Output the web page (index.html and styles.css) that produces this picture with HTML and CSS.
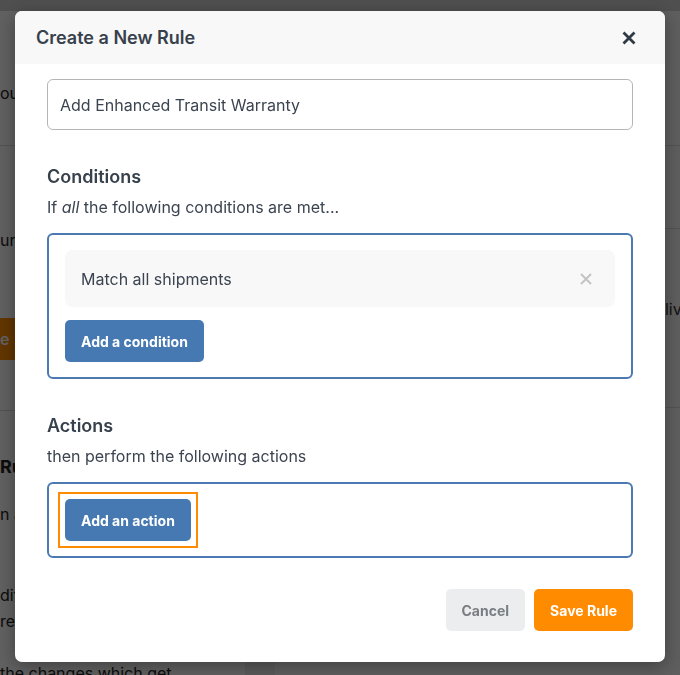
FILE: index.html
```html
<!DOCTYPE html>
<html lang="en">
<head>
<meta charset="utf-8">
<title>Create a New Rule</title>
<link rel="stylesheet" href="styles.css">
</head>
<body>
<div class="page">
  <div class="topbar"></div>
  <div class="layout">
    <aside class="side">
      <section class="side-block first">
        <p class="side-text">ou can automate</p>
      </section>
      <section class="side-block second">
        <p class="side-text">ur rules run</p>
        <button class="bg-btn">e</button>
      </section>
      <section class="side-block third">
        <h4 class="side-title">Rules</h4>
        <p class="side-text gap-a">n action is</p>
        <p class="side-para">ditions<br>re met</p>
        <p class="side-text">the changes which get</p>
      </section>
    </aside>
    <div class="gutter"></div>
    <main class="main">
      <div class="row r1"></div>
      <div class="row r2"></div>
      <div class="row r3"><span class="cell-fill"></span><span class="cell-last">Deliv</span></div>
      <div class="row r4"></div>
    </main>
  </div>
</div>
<div class="backdrop"></div>
<div class="modal" role="dialog" aria-labelledby="modal-title">
  <header class="modal-header">
    <h2 class="modal-title" id="modal-title">Create a New Rule</h2>
    <button class="close" aria-label="Close">
      <svg viewBox="0 0 14 14" width="14" height="14"><path d="M1.5 1.5 L12.5 12.5 M12.5 1.5 L1.5 12.5" stroke="#2f3a46" stroke-width="2.8" stroke-linecap="butt" fill="none"/></svg>
    </button>
  </header>
  <div class="modal-body">
    <input class="text-input" type="text" value="Add Enhanced Transit Warranty">

    <section class="section">
      <h3 class="section-title">Conditions</h3>
      <p class="section-desc">If <em>all</em> the following conditions are met...</p>
      <div class="rule-box">
        <div class="rule-item">
          <span>Match all shipments</span>
          <button class="item-remove" aria-label="Remove">
            <svg viewBox="0 0 12 12" width="12" height="12"><path d="M1 1 L11 11 M11 1 L1 11" stroke="#c2c2c2" stroke-width="1.8" fill="none"/></svg>
          </button>
        </div>
        <button class="btn btn-blue">Add a condition</button>
      </div>
    </section>

    <section class="section">
      <h3 class="section-title">Actions</h3>
      <p class="section-desc">then perform the following actions</p>
      <div class="rule-box">
        <button class="btn btn-blue focused">Add an action</button>
      </div>
    </section>

    <footer class="modal-footer">
      <button class="btn btn-cancel">Cancel</button>
      <button class="btn btn-save">Save Rule</button>
    </footer>
  </div>
</div>
</body>
</html>
```
FILE: styles.css
```css
* { box-sizing: border-box; }
html, body { margin: 0; height: 100%; }
body {
  font-family: Inter, "Noto Sans", "Liberation Sans", sans-serif;
  background: #fff;
  color: #222;
  overflow: hidden;
}

/* background page */
.page { height: 675px; }
.topbar { height: 11px; background: #d0d0d0; }
.layout { display: flex; height: 664px; }
.side { width: 245px; background: #fbfbfb; overflow: hidden; }
.gutter { width: 30px; background: #ececec; }
.main { flex: 1; background: #f7f7f7; overflow: hidden; }

.side-text, .side-para, .side-title { margin: 0; white-space: nowrap; font-size: 16px; line-height: 22px; color: #222; }
.side-block { border-bottom: 1px solid #d8d8d8; }
.side-block.first { padding: 71px 0 41px; }
.side-block.second { padding: 83px 0 50px; }
.side-block.second .side-text { margin-bottom: 67px; }
.side-block.third { padding-top: 45px; border-bottom: 0; }
.side-title { font-size: 18px; font-weight: 700; }
.gap-a { margin-top: 25px; }
.side-para { margin-top: 57px; line-height: 26px; }
.side-para + .side-text { margin-top: 28px; }
.bg-btn {
  display: block; height: 42px; width: 120px; border: 0; padding: 0;
  text-align: left; background: #ff8c00; color: #fff; font: 600 16px Inter, sans-serif;
}

.row { border-bottom: 1px solid #d8d8d8; display: flex; align-items: center; }
.r1 { height: 135px; }
.r2 { height: 83px; }
.r3 { height: 179px; }
.r4 { height: 100px; border-bottom: 0; }
.cell-fill { flex: 1; }
.cell-last { width: 36px; overflow: hidden; white-space: nowrap; font-size: 16px; line-height: 22px; color: #333; margin-top: -18px; }

.backdrop { position: fixed; inset: 0; background: rgba(0, 0, 0, 0.62); }

/* modal */
.modal {
  position: fixed; left: 15px; top: 11px;
  width: 650px; height: 651px;
  background: #fff; border-radius: 7px;
  box-shadow: 0 4px 18px rgba(0, 0, 0, 0.35);
  display: flex; flex-direction: column; overflow: hidden;
  color: #3b4450;
}
.modal-header {
  flex: none; height: 53px; background: #f8f8f8;
  display: flex; align-items: center; justify-content: space-between;
  padding: 0 29px 0 21px;
}
.modal-title { margin: 0; font-size: 18px; line-height: 22px; font-weight: 600; color: #37414c; }
.close { border: 0; background: none; padding: 0; width: 14px; height: 14px; display: flex; cursor: pointer; }

.modal-body { padding: 15px 32px 31px; display: flex; flex-direction: column; }
.text-input {
  height: 51px; width: 100%;
  border: 1px solid #b5b5b5; border-radius: 6px;
  padding: 0 12px; font: 400 16px Inter, sans-serif; color: #3b4450;
  background: #fff; outline: none;
}

.section { margin-top: 36px; }
.section-title { margin: 0 0 8px; font-size: 18px; line-height: 22px; font-weight: 600; color: #37414c; }
.section-desc { margin: 0 0 15px; font-size: 16px; line-height: 22px; color: #3b4450; }
.rule-box {
  border: 2px solid #4a7ab1; border-radius: 6px;
  padding: 15px 16px;
  display: flex; flex-direction: column; align-items: flex-start;
}
.rule-item {
  align-self: stretch; height: 57px; margin-bottom: 13px;
  background: #f8f8f8; border-radius: 8px;
  display: flex; align-items: center; justify-content: space-between;
  padding: 0 23px 0 16px; font-size: 16px; color: #3b4450;
}
.item-remove { border: 0; background: none; padding: 0; display: flex; }

.btn {
  height: 42px; border: 0; border-radius: 5px; padding: 0 16px;
  font: 700 14px Inter, sans-serif; cursor: pointer;
}
.btn-blue { background: #4679b2; color: #fff; }
.btn.focused { position: relative; }
.btn.focused::after {
  content: ""; position: absolute; inset: -7px;
  border: 2px solid #ff8c00; pointer-events: none;
}
.modal-footer { margin-top: 31px; display: flex; justify-content: flex-end; gap: 9px; }
.btn-cancel { background: #ebedef; color: #7a7e83; }
.btn-save { background: #ff8c00; color: #fff; }
```
